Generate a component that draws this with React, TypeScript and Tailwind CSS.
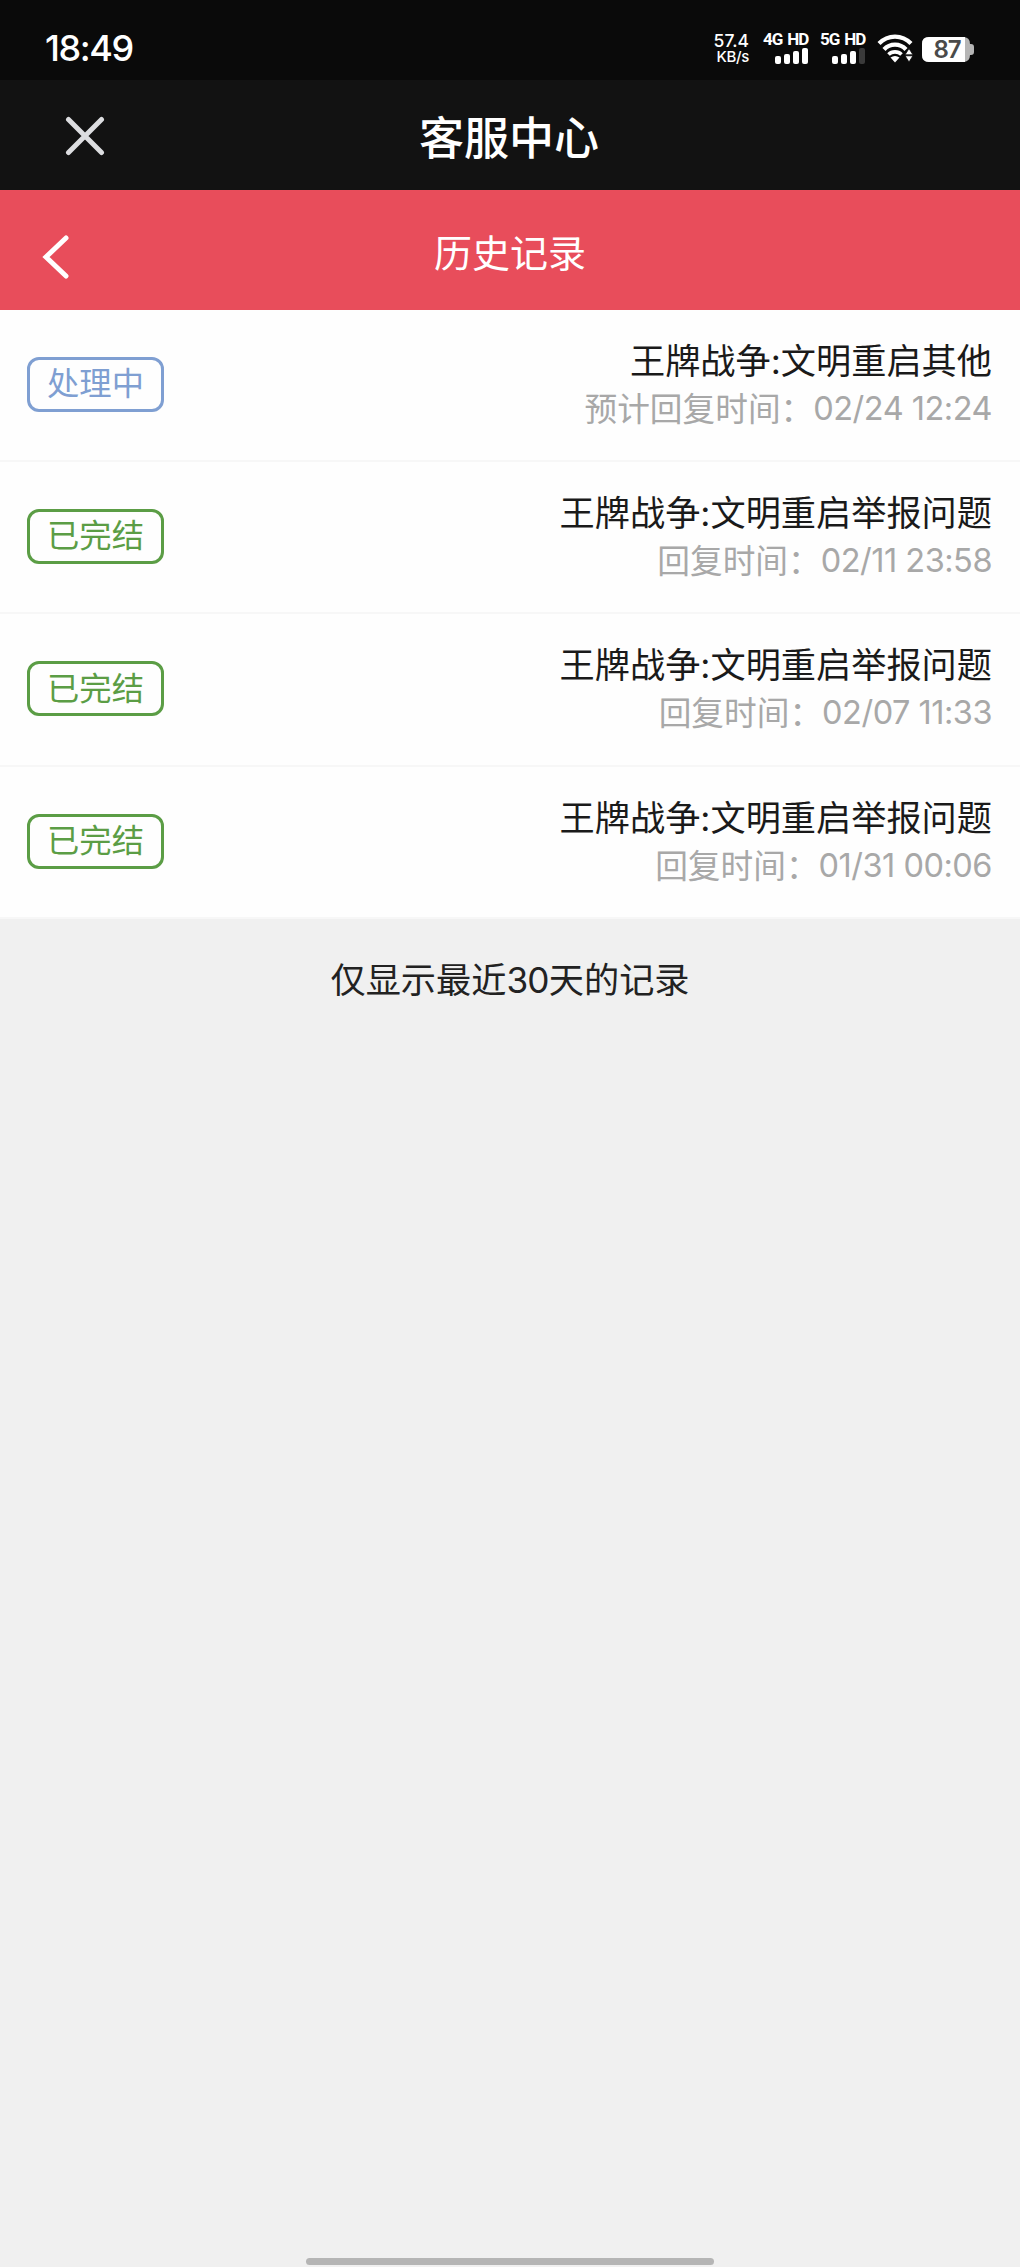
const RECORDS = [
  { title: "王牌战争:文明重启其他", status: "处理中", done: false, label: "预计回复时间：", time: "02/24 12:24" },
  { title: "王牌战争:文明重启举报问题", status: "已完结", done: true, label: "回复时间：", time: "02/11 23:58" },
  { title: "王牌战争:文明重启举报问题", status: "已完结", done: true, label: "回复时间：", time: "02/07 11:33" },
  { title: "王牌战争:文明重启举报问题", status: "已完结", done: true, label: "回复时间：", time: "01/31 00:06" },
];

function Signal({ label, weak }: { label: string; weak?: boolean }) {
  return (
    <div className="flex flex-col w-[46px] items-end">
      <span className="w-full text-[17px] leading-[15px] mb-px font-bold font-['Roboto'] tracking-[-1.1px] [word-spacing:2px] whitespace-nowrap">
        {label}
      </span>
      <svg width="34" height="16" viewBox="0 0 34 16" fill="#fff">
        <rect x="0" y="8" width="6" height="8" rx="2" />
        <rect x="9" y="6" width="6" height="10" rx="2" />
        <rect x="18" y="3" width="6" height="13" rx="2" />
        <rect x="27" y="0" width="6" height="16" rx="2" fill={weak ? "#3a3a3a" : "#fff"} />
      </svg>
    </div>
  );
}

function StatusBar() {
  return (
    <div className="h-20 bg-[#0a0a0a] text-white flex items-start justify-between pl-[45px] pr-[46px]">
      <span className="mt-[26px] text-[36px] leading-[44px] font-medium tracking-[-1.4px]">18:49</span>
      <div className="flex items-start mt-8">
        <div className="flex flex-col items-end w-[36px] mr-[14px] font-medium">
          <span className="text-[17.5px] leading-[17px]">57.4</span>
          <span className="text-[15px] leading-[15px] tracking-[-0.3px] whitespace-nowrap">KB/s</span>
        </div>
        <Signal label="4G HD" />
        <div className="w-[11px]" />
        <Signal label="5G HD" weak />
        <svg className="ml-[11px] mt-[2px]" width="36" height="30" viewBox="0 0 36 30" fill="none">
          <path d="M2 9.5C11 .2 25 .2 34 9.5" stroke="#fff" strokeWidth="4.2" />
          <path d="M7 15.5C13 9 23 9 29 15.5" stroke="#fff" strokeWidth="4.2" />
          <path d="M11.5 20.5C15 17 21 17 24.5 20.5" stroke="#fff" strokeWidth="3.6" />
          <path d="M13.5 23.5Q18 20.5 22.5 23.5L18 28.5Z" fill="#fff" />
          <path d="M28 20.8L32 14.5L36 20.8ZM28 21.8L32 28L36 21.8Z" fill="#fff" stroke="#0a0a0a" strokeWidth=".8" />
        </svg>
        <div className="relative ml-[9px] mt-[5px] w-[52px] h-[25px] flex items-center">
          <svg className="absolute inset-0" width="52" height="25" viewBox="0 0 52 25">
            <path d="M7 0H41Q48 0 48 7H49Q52 7 52 10V15Q52 18 49 18H48Q48 25 41 25H7Q0 25 0 18V7Q0 0 7 0Z" fill="#b5b5b5" />
            <path d="M7 0H43V25H7Q0 25 0 18V7Q0 0 7 0Z" fill="#fff" />
          </svg>
          <span className="relative w-[50px] text-center text-[24px] leading-[25px] font-semibold tracking-[-1.2px] text-[#4a4a4a]">87</span>
        </div>
      </div>
    </div>
  );
}

export default function App() {
  return (
    <div className="w-[1020px] h-[2267px] flex flex-col bg-[#f0f0f0] font-[Inter,'Noto_Sans_CJK_SC',sans-serif]">
      <StatusBar />

      <header className="h-[110px] bg-[#121212] grid grid-cols-[1fr_auto_1fr] items-center">
        <svg className="ml-[65px] mt-[2px]" width="40" height="40" viewBox="0 0 40 40" stroke="#dcdde0" strokeWidth="5" strokeLinecap="round">
          <path d="M3.5 3.5L36.5 36.5M36.5 3.5L3.5 36.5" />
        </svg>
        <h1 className="mt-[8px] -ml-[2px] text-[45px] leading-[60px] font-medium text-white">客服中心</h1>
      </header>

      <div className="h-[119.5px] bg-[#e84d5b] grid grid-cols-[1fr_auto_1fr] items-center">
        <svg className="ml-[42px] mt-[14px]" width="28" height="44" viewBox="0 0 28 44" fill="none" stroke="#fff" strokeWidth="5" strokeLinecap="round">
          <path d="M24 3L4 22L24 41" />
        </svg>
        <h2 className="text-[38px] leading-[50px] text-white mt-[6px]">历史记录</h2>
      </div>

      <div className="flex flex-col bg-[#fefefe]">
        {RECORDS.map((r, i) => (
          <div
            key={i}
            className="h-[152.4px] flex items-start justify-between pl-[27px] pr-[28px] border-b-2 border-[#f7f7f7]"
          >
            <div
              className={`mt-[47px] w-[137px] h-[55px] rounded-[12px] border-3 flex items-center justify-center text-[32.3px] leading-[50px] ${
                r.done ? "border-[#5b9d45] text-[#5b9d45]" : "border-[#7f9fd2] text-[#7f9fd2]"
              }`}
            >
              {r.status}
            </div>
            <div className="flex flex-col items-end mt-[27px]">
              <span className="text-[35.2px] leading-[48px] text-[#1a1a1a]">{r.title}</span>
              <span className="mt-px text-[32.7px] leading-[46px] text-[#a8a8a8] flex">
                <span>{r.label}</span>
                <span className="text-[32.5px] tracking-[-0.5px]">{r.time}</span>
              </span>
            </div>
          </div>
        ))}
      </div>

      <p className="mt-[36px] text-center text-[35.2px] leading-[50px] text-[#222]">
        仅显示最近<span className="tracking-[-0.8px]">30</span>天的记录
      </p>

      <div className="mt-auto mb-[2px] mx-auto w-[408px] h-[7px] rounded-full bg-[#b5b5b5]" />
    </div>
  );
}
